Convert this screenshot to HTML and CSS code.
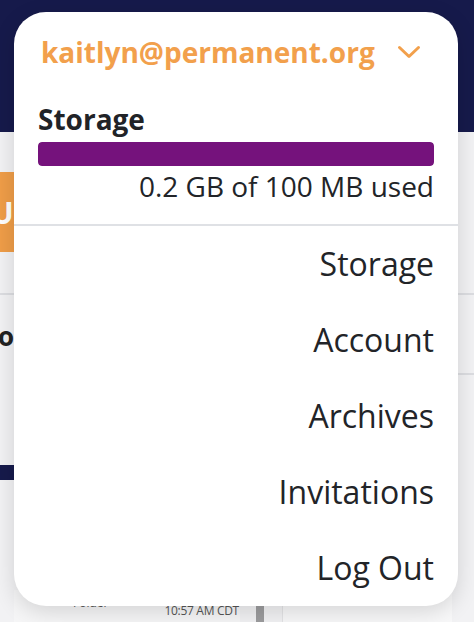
FILE: index.html
```html
<!DOCTYPE html>
<html lang="en">
<head>
<meta charset="utf-8">
<title>Account menu</title>
<link rel="stylesheet" href="styles.css">
</head>
<body>
<div class="app">
  <header class="topbar"></header>
  <main class="main">
    <div class="toolbar">
      <button class="upload">UPLOAD</button>
    </div>
    <div class="row row-title"><span class="title">o</span></div>
    <div class="row-empty"><span class="right-rule"></span></div>
    <div class="row-progress"><span class="navy-bar"></span></div>
    <div class="row-files">
      <div class="file-card">
        <span class="file-type">Folder</span>
        <span class="file-date">10:57 AM CDT</span>
      </div>
      <span class="scroll-thumb"></span>
      <div class="side-panel"></div>
    </div>
  </main>
</div>

<div class="account-menu">
  <div class="menu-header">
    <span class="email">kaitlyn@permanent.org</span>
    <svg class="chevron" width="24" height="14" viewBox="0 0 24 14" aria-hidden="true">
      <polyline points="2.5,2.5 12,11.5 21.5,2.5" fill="none" stroke="#f2a04c" stroke-width="3" stroke-linecap="round" stroke-linejoin="round"/>
    </svg>
  </div>
  <div class="storage">
    <div class="storage-title">Storage</div>
    <div class="storage-bar"><div class="storage-fill" style="width:100%"></div></div>
    <div class="storage-text">0.2 GB of 100 MB used</div>
  </div>
  <nav class="menu-list">
    <a class="menu-item">Storage</a>
    <a class="menu-item">Account</a>
    <a class="menu-item">Archives</a>
    <a class="menu-item">Invitations</a>
    <a class="menu-item">Log Out</a>
  </nav>
</div>
</body>
</html>
```
FILE: styles.css
```css
* { box-sizing: border-box; }
html, body { margin: 0; padding: 0; }
body {
  width: 474px;
  height: 622px;
  overflow: hidden;
  font-family: "Open Sans", "Noto Sans", sans-serif;
  background: #f2f2f4;
  position: relative;
}

.app { display: flex; flex-direction: column; }
.topbar { height: 132px; background: #161a4b; }
.main { background: #f2f2f4; display: flex; flex-direction: column; }

.toolbar { height: 161px; padding-top: 40px; }
.upload {
  display: block;
  margin: 0 0 0 -9px;
  width: 130px;
  height: 80px;
  border: 0;
  border-radius: 4px;
  background: #ef9d48;
  color: #ffffff;
  font-family: "Open Sans", sans-serif;
  font-weight: 700;
  font-size: 30px;
  text-align: left;
  padding: 0;
}

.row { border-top: 2px solid #dcdde1; }
.row-title { height: 80px; padding-top: 26px; }
.title {
  display: block;
  margin-left: -2px;
  font-weight: 700;
  font-size: 26px;
  line-height: 30px;
  color: #222;
}
.row-empty { height: 92px; display: flex; justify-content: flex-end; }
.right-rule { display: block; width: 40px; height: 2px; background: #dcdde1; }
.row-progress { height: 125px; }
.navy-bar { display: block; width: 40px; height: 15px; background: #161a4b; }

.row-files {
  height: 40px;
  display: flex;
  padding-left: 14px;
}
.file-card {
  width: 226px;
  flex: none;
  background: #f6f6f7;
  display: flex;
  gap: 56px;
  padding-left: 59px;
  padding-top: 6px;
  font-size: 12px;
  color: #555;
  white-space: nowrap;
}
.file-type { line-height: 14px; }
.file-date { line-height: 16px; padding-top: 7px; letter-spacing: -0.3px; }
.scroll-thumb { width: 8px; flex: none; background: #9c9c9e; margin-left: 16px; margin-top: 10px; }
.side-panel { width: 170px; flex: none; margin-left: 18px; background: #f8f8f9; border-left: 1px solid #e4e4e6; }

/* overlay menu */
.account-menu {
  position: absolute;
  left: 14px;
  top: 12px;
  width: 444px;
  height: 594px;
  background: #ffffff;
  border-radius: 32px;
  box-shadow: 0 6px 22px rgba(0, 0, 0, 0.14);
  display: flex;
  flex-direction: column;
  overflow: hidden;
}

.menu-header {
  display: flex;
  align-items: center;
  gap: 22px;
  padding: 20px 24px 0 27px;
}
.email {
  font-weight: 700;
  font-size: 28px;
  line-height: 40px;
  color: #f2a04c;
}
.chevron { display: block; }

.storage { padding: 31px 24px 0 24px; }
.storage-title {
  font-weight: 700;
  font-size: 28px;
  line-height: 33px;
  color: #212327;
}
.storage-bar {
  margin-top: 6px;
  height: 24px;
  border-radius: 4px;
  background: #e6e6e6;
  overflow: hidden;
}
.storage-fill { height: 100%; background: #75127c; border-radius: 4px; }
.storage-text {
  margin-top: 2px;
  text-align: right;
  font-size: 28px;
  line-height: 36px;
  color: #222428;
}

.menu-list {
  margin-top: 20px;
  border-top: 2px solid #dfe1e5;
  display: flex;
  flex-direction: column;
}
.menu-item {
  display: block;
  height: 76px;
  line-height: 76px;
  padding-right: 24px;
  text-align: right;
  font-size: 32px;
  color: #222428;
}
```
